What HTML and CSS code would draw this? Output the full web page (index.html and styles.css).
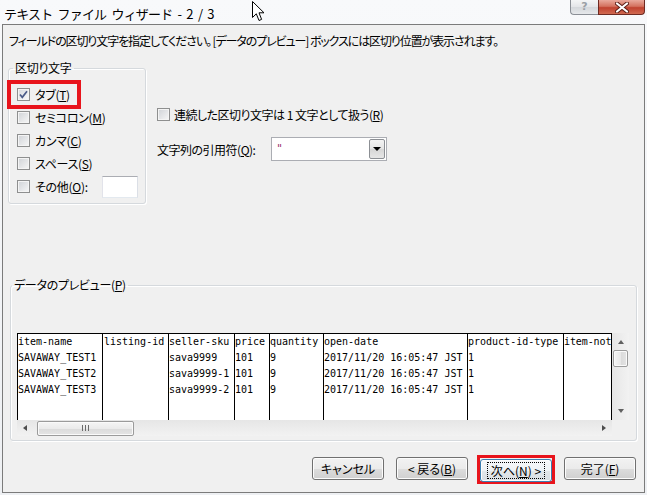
FILE: index.html
```html
<!DOCTYPE html>
<html lang="ja">
<head>
<meta charset="utf-8">
<title>テキスト ファイル ウィザード - 2 / 3</title>
<link rel="stylesheet" href="styles.css">
</head>
<body>
<div class="window">
  <div class="titlebar">
    <span class="title">テキスト ファイル ウィザード - 2 / 3</span>
    <div class="caption">
      <span class="cap-help">?</span>
      <span class="cap-close"><svg width="14" height="11" viewBox="0 0 14 11"><path d="M2 1.5 L12 9.5 M12 1.5 L2 9.5" stroke="#5a1d16" stroke-width="4" stroke-linecap="round"/><path d="M2 1.5 L12 9.5 M12 1.5 L2 9.5" stroke="#ffffff" stroke-width="2.2" stroke-linecap="round"/></svg></span>
    </div>
  </div>
  <div class="panel">
    <p class="instr">フィールドの区切り文字を指定してください。 [データのプレビュー] ボックスには区切り位置が表示されます。</p>
    <div class="options">
      <fieldset class="group delim">
        <legend>区切り文字</legend>
        <div class="opt"><span class="hl"><span class="cb checked"><svg width="11" height="11" viewBox="0 0 11 11"><path d="M2 5.5 L4.3 8.3 L9 2.2" fill="none" stroke="#4b5b88" stroke-width="1.7"/></svg></span><span>タブ(<u>T</u>)</span></span></div>
        <div class="opt"><span class="cb"></span><span>セミコロン(<u>M</u>)</span></div>
        <div class="opt"><span class="cb"></span><span>カンマ(<u>C</u>)</span></div>
        <div class="opt"><span class="cb"></span><span>スペース(<u>S</u>)</span></div>
        <div class="opt"><span class="cb"></span><span>その他(<u>O</u>):</span><span class="textbox"></span></div>
      </fieldset>
      <div class="right-opts">
        <div class="opt2"><span class="cb"></span><span>連続した区切り文字は 1 文字として扱う(<u>R</u>)</span></div>
        <div class="quote-row">
          <span class="quote-label">文字列の引用符(<u>Q</u>):</span>
          <span class="combo"><span class="combo-val">"</span><span class="combo-btn"><span class="tri-down"></span></span></span>
        </div>
      </div>
    </div>
    <fieldset class="group preview">
      <legend>データのプレビュー(<u>P</u>)</legend>
      <div class="grid-wrap">
        <div class="viewport">
          <div class="col w1"><div>item-name</div><div>SAVAWAY_TEST1</div><div>SAVAWAY_TEST2</div><div>SAVAWAY_TEST3</div></div>
          <div class="col w2"><div>listing-id</div><div></div><div></div><div></div></div>
          <div class="col w3"><div>seller-sku</div><div>sava9999</div><div>sava9999-1</div><div>sava9999-2</div></div>
          <div class="col w4"><div>price</div><div>101</div><div>101</div><div>101</div></div>
          <div class="col w5"><div>quantity</div><div>9</div><div>9</div><div>9</div></div>
          <div class="col w6"><div>open-date</div><div>2017/11/20 16:05:47 JST</div><div>2017/11/20 16:05:47 JST</div><div>2017/11/20 16:05:47 JST</div></div>
          <div class="col w7"><div>product-id-type</div><div>1</div><div>1</div><div>1</div></div>
          <div class="col w8"><div>item-not</div><div></div><div></div><div></div></div>
        </div>
        <div class="vscroll">
          <span class="tri-up"></span>
          <span class="vthumb"></span>
          <span class="tri-down small"></span>
        </div>
        <div class="hscroll">
          <span class="tri-left"></span>
          <span class="hthumb"><span class="grip"></span><span class="grip"></span><span class="grip"></span></span>
          <span class="tri-right"></span>
        </div>
        <div class="corner"></div>
      </div>
    </fieldset>
    <div class="buttons">
      <span class="btn">キャンセル</span>
      <span class="btn">&lt; 戻る(<u>B</u>)</span>
      <span class="redbox"><span class="btn default"><span class="focus">次へ(<u>N</u>) &gt;</span></span></span>
      <span class="btn">完了(<u>F</u>)</span>
    </div>
  </div>
  <svg class="cursor" width="14" height="22" viewBox="0 0 14 22"><path d="M0.5 0.5 L0.5 16.5 L4.3 12.8 L7 19.5 L9.6 18.4 L7 11.8 L12 11.8 Z" fill="#fff" stroke="#000" stroke-width="1" stroke-linejoin="round"/></svg>
</div>
</body>
</html>
```
FILE: styles.css
```css
* { box-sizing: border-box; }
body {
  margin: 0;
  width: 647px;
  height: 495px;
  overflow: hidden;
  font-family: "Noto Sans CJK JP", "Noto Sans", sans-serif;
  font-size: 12px;
  color: #000;
  background: #f2f4f7;
}
.window {
  position: relative;
  width: 647px;
  height: 495px;
  display: flex;
  flex-direction: column;
  background: linear-gradient(#f8f9fb, #eef0f3);
}
.titlebar {
  height: 24px;
  display: flex;
  justify-content: space-between;
  align-items: flex-start;
  padding-left: 4px;
  flex: none;
}
.title {
  font-size: 13px;
  line-height: 16px;
  margin-top: 6px;
  letter-spacing: -0.8px;
  word-spacing: 3px;
}
.caption { display: flex; margin-right: 2px; }
.cap-help {
  width: 28px;
  height: 15px;
  border: 1px solid #8b8f96;
  border-top: none;
  border-right: none;
  border-radius: 0 0 0 4px;
  background: linear-gradient(#f4f5f6, #e3e5e8 50%, #d4d7db 51%, #e6e8eb);
  color: #9aa0a6;
  font-family: "DejaVu Sans", sans-serif;
  font-size: 11px;
  font-weight: bold;
  line-height: 13px;
  text-align: center;
}
.cap-close {
  width: 47px;
  height: 15px;
  border: 1px solid #6e2a22;
  border-top: none;
  border-radius: 0 0 4px 0;
  background: linear-gradient(#e9a99c, #d4725f 45%, #c0422f 55%, #d06a52);
  display: flex;
  align-items: center;
  justify-content: center;
}
.panel {
  margin-left: 2px;
  width: 643px;
  height: 469px;
  border: 1px solid #7b7b7b;
  background: #f0f0f0;
  padding: 8px 8px 0 5px;
  display: flex;
  flex-direction: column;
  flex: none;
}
.instr {
  margin: 0 0 0 1px;
  line-height: 16px;
  white-space: nowrap;
  font-feature-settings: "palt";
  letter-spacing: -1.1px;
}
.options {
  display: flex;
  margin-top: 11px;
}
.group {
  margin: 0;
  min-width: 0;
  border: 1px solid #d5d9dd;
  border-radius: 3px;
  box-shadow: inset 1px 1px 0 #fff, 1px 1px 0 #fff;
}
.group legend {
  padding: 0 2px;
  line-height: 16px;
  font-feature-settings: "palt";
  letter-spacing: -0.3px;
}
.delim {
  width: 138px;
  padding: 7px 7px 5px 8px;
}
.delim legend { margin-left: -4px; }
.opt {
  display: flex;
  align-items: center;
  height: 23px;
  gap: 5px;
  font-feature-settings: "palt";
  letter-spacing: -0.3px;
}
.hl {
  display: flex;
  align-items: center;
  gap: 5px;
  padding: 2px 7px 2px 6px;
  margin: -2px -7px -2px -6px;
  outline: 4px solid #e8141c;
}
.cb {
  width: 13px;
  height: 13px;
  flex: none;
  border: 1px solid #8e8f8f;
  background: linear-gradient(135deg, #cfd2d6, #f7f7f7);
  box-shadow: inset 0 0 0 1px #f4f4f4;
  display: flex;
  align-items: center;
  justify-content: center;
}
.cb.checked { background: linear-gradient(135deg, #d6d9de, #fbfbfb); }
.textbox {
  margin-left: auto;
  width: 36px;
  height: 22px;
  background: #fff;
  border: 1px solid #abadb3;
  border-left-color: #e2e3ea;
  border-right-color: #dbdfe6;
  border-bottom-color: #e3e9ef;
}
.right-opts {
  margin-left: 11px;
  padding-top: 44px;
  font-feature-settings: "palt";
  letter-spacing: -0.5px;
}
.opt2 {
  display: flex;
  align-items: center;
  height: 20px;
  gap: 4px;
}
.quote-row {
  display: flex;
  align-items: center;
  margin-top: 13px;
}
.quote-label { width: 114px; }
.combo {
  width: 116px;
  height: 24px;
  background: #fff;
  border: 1px solid #abadb3;
  display: flex;
  align-items: center;
  padding: 1px;
}
.combo-val {
  flex: 1;
  padding-left: 4px;
  color: #9a2c6c;
  font-family: "DejaVu Sans", sans-serif;
  font-size: 11px;
  line-height: 14px;
}
.combo-btn {
  width: 16px;
  height: 20px;
  border: 1px solid #8c8f94;
  border-radius: 2px;
  background: linear-gradient(#f3f3f3, #e5e5e5 50%, #d6d6d6 51%, #e6e6e6);
  display: flex;
  align-items: center;
  justify-content: center;
}
.tri-down {
  width: 0; height: 0;
  border-left: 4px solid transparent;
  border-right: 4px solid transparent;
  border-top: 4px solid #000;
}
.preview {
  margin-top: 73px;
  margin-left: 2px;
  width: 627px;
  padding: 40px 7px 4px 6px;
}
.preview legend { margin-left: -5px; }
.grid-wrap {
  display: grid;
  grid-template-columns: 595px 17px;
  grid-template-rows: 87px 16px;
}
.viewport {
  display: flex;
  background: #fff;
  border-top: 1px solid #000;
  border-right: 1px solid #000;
  overflow: hidden;
  font-family: "DejaVu Sans Mono", monospace;
  font-size: 10px;
  line-height: 16px;
  white-space: nowrap;
}
.col {
  flex: none;
  border-left: 1px solid #000;
  padding-left: 1px;
  overflow: hidden;
}
.col div { height: 16px; }
.w1 { width: 85px; padding-left: 0; }
.w2 { width: 66px; }
.w3 { width: 66px; padding-left: 0; }
.w4 { width: 35px; padding-left: 0; }
.w5 { width: 54px; padding-left: 0; }
.w6 { width: 144px; padding-left: 0; }
.w7 { width: 96px; padding-left: 0; }
.w8 { flex: 1; padding-left: 0; letter-spacing: -0.1px; }
.vscroll {
  background: linear-gradient(90deg, #e6e6e6, #f2f2f2);
  display: flex;
  flex-direction: column;
  align-items: center;
  padding: 7px 0 7px;
}
.tri-up {
  width: 0; height: 0;
  border-left: 3.5px solid transparent;
  border-right: 3.5px solid transparent;
  border-bottom: 4px solid #606060;
}
.tri-down.small {
  border-left-width: 3.5px;
  border-right-width: 3.5px;
  border-top-color: #606060;
  margin-top: auto;
}
.vthumb {
  margin-top: 6px;
  width: 15px;
  height: 17px;
  border: 1px solid #9b9b9b;
  border-radius: 2px;
  background: linear-gradient(90deg, #f5f5f5, #e8e8e8 50%, #dadada 51%, #e4e4e4);
  box-shadow: inset 0 0 0 1px #fafafa;
}
.hscroll {
  background: linear-gradient(#e6e6e6, #f2f2f2);
  display: flex;
  align-items: center;
  padding: 0 6px 0 6px;
}
.tri-left {
  width: 0; height: 0;
  border-top: 3.5px solid transparent;
  border-bottom: 3.5px solid transparent;
  border-right: 4px solid #4d4d4d;
}
.tri-right {
  margin-left: auto;
  width: 0; height: 0;
  border-top: 3.5px solid transparent;
  border-bottom: 3.5px solid transparent;
  border-left: 4px solid #4d4d4d;
}
.hthumb {
  margin-left: 10px;
  width: 97px;
  height: 15px;
  border: 1px solid #9b9b9b;
  border-radius: 2px;
  background: linear-gradient(#f5f5f5, #ebebeb 50%, #dbdbdb 51%, #e4e4e4);
  box-shadow: inset 0 0 0 1px #fafafa;
  display: flex;
  align-items: center;
  justify-content: center;
  gap: 2px;
}
.grip {
  width: 1px;
  height: 6px;
  background: #6b6b6b;
}
.corner { background: #f0f0f0; }
.buttons {
  display: flex;
  justify-content: flex-end;
  align-items: flex-start;
  gap: 12px;
  margin-top: 16px;
}
.btn {
  width: 72px;
  height: 23px;
  border: 1px solid #707070;
  border-radius: 3px;
  background: linear-gradient(#f2f2f2, #ebebeb 50%, #dddddd 51%, #cfcfcf);
  box-shadow: inset 0 0 0 1px #fcfcfc;
  display: flex;
  align-items: center;
  justify-content: center;
  font-feature-settings: "palt";
  line-height: 15px;
}
.redbox {
  display: block;
  border: 3px solid #e8141c;
  margin: -2px -3px;
  padding-top: 1px;
  height: 29px;
}
.btn.default {
  border-color: #3c7fb1;
  background: linear-gradient(#f6f8fa, #eef2f5 50%, #e2e7eb 51%, #d9dee3);
}
.focus {
  border: 1px dotted #000;
  padding: 0 3px;
}
.cursor {
  position: absolute;
  left: 252px;
  top: 1px;
}
```
